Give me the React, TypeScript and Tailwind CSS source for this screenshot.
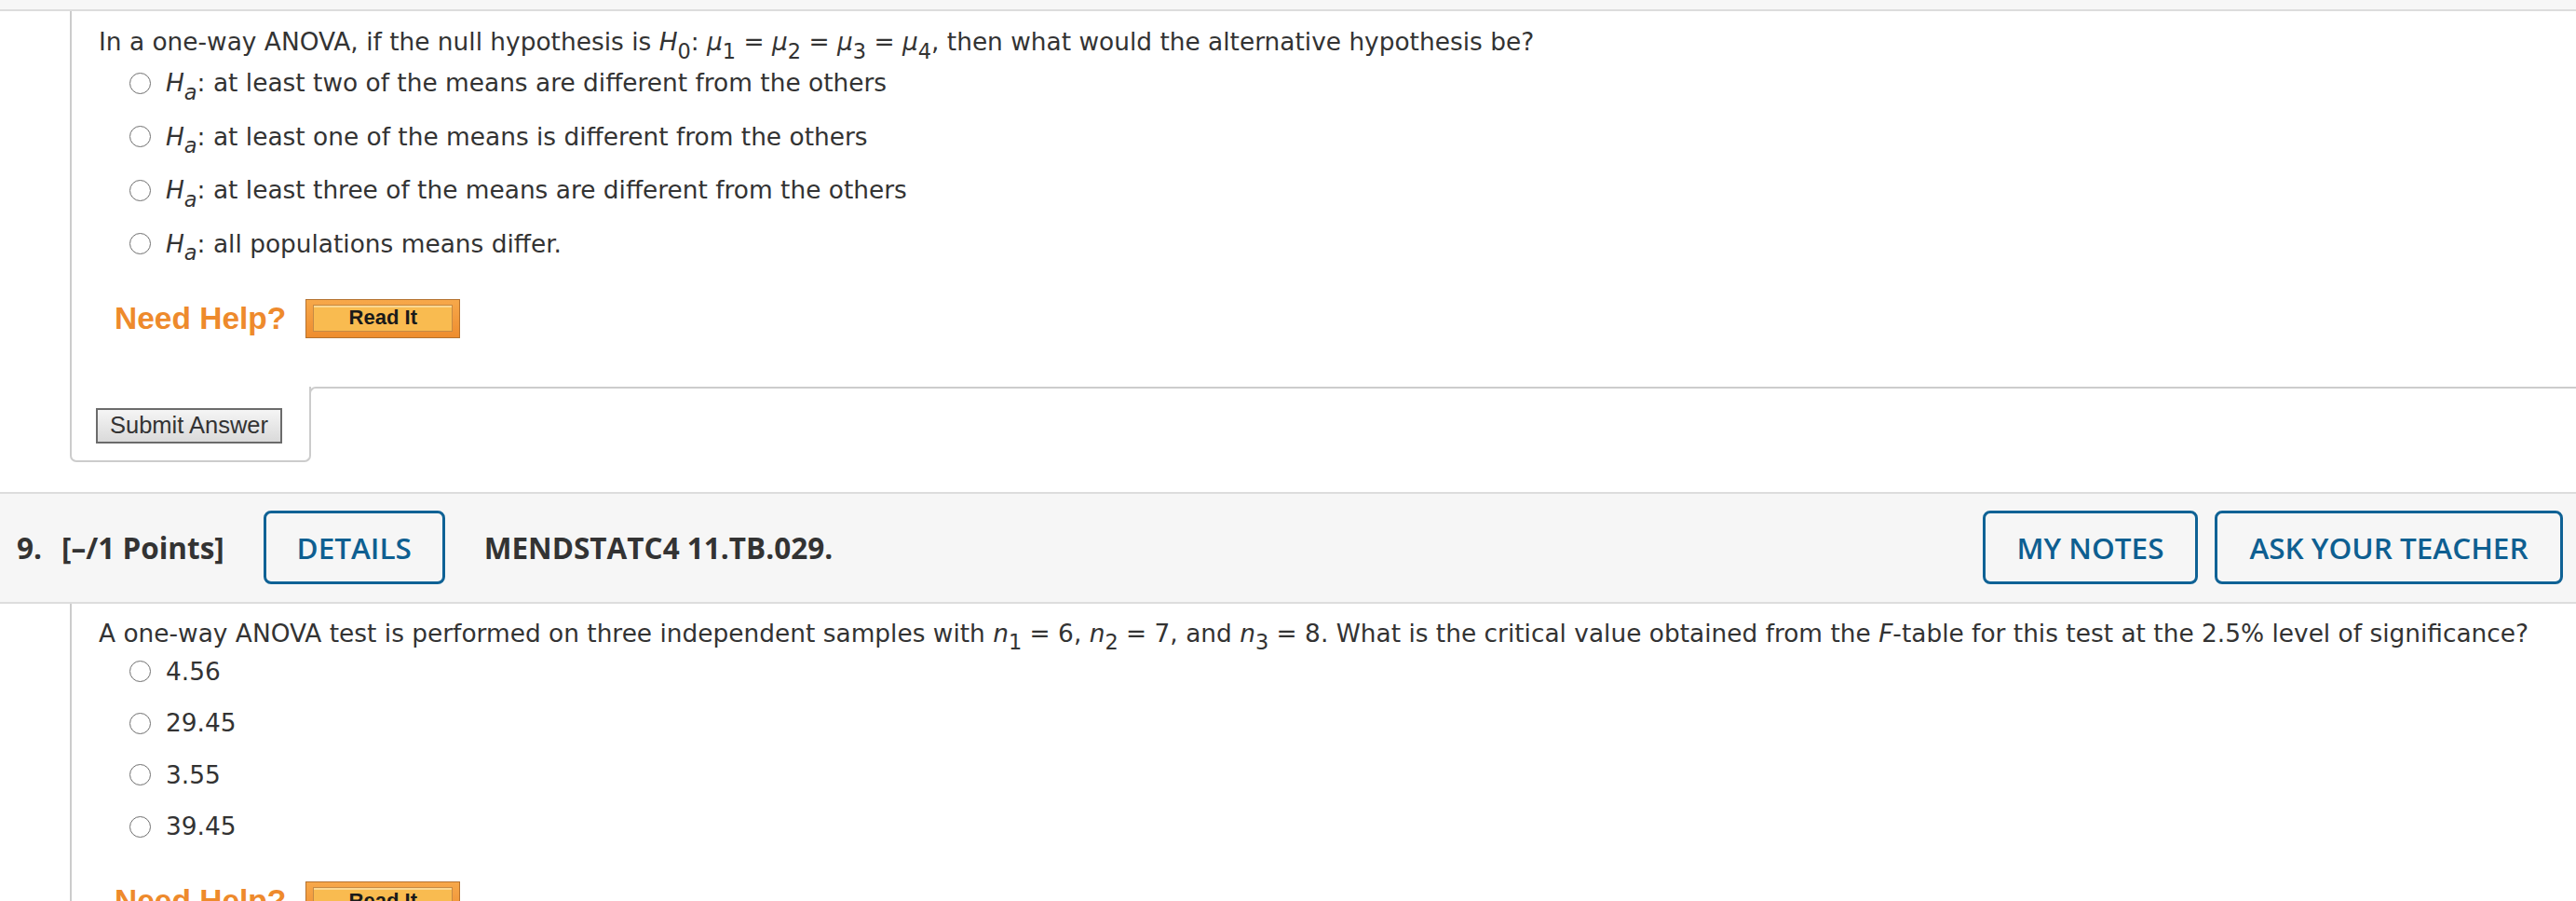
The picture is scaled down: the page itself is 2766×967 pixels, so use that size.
import React from "react";

const body = "font-['DejaVu_Sans','Verdana',sans-serif] text-[26.4px] leading-[30px] text-[#333333]";

function Sub({ children }: { children: React.ReactNode }) {
  return <span className="relative top-[0.4em] text-[0.85em] leading-none not-italic">{children}</span>;
}

function Radio() {
  return <span className="inline-block w-[23px] h-[23px] shrink-0 rounded-full border-[1.5px] border-[#707070] bg-white" />;
}

function Option({ children }: { children: React.ReactNode }) {
  return (
    <div className="flex items-center pl-[33px]">
      <Radio />
      <span className="ml-[16px] whitespace-nowrap">{children}</span>
    </div>
  );
}

function Ha() {
  return (
    <>
      <i>H</i>
      <Sub>
        <i>a</i>
      </Sub>
      :
    </>
  );
}

function NeedHelp() {
  return (
    <div className="flex items-center ml-[17px] h-[42px]">
      <span className="font-['Liberation_Sans',Arial,sans-serif] font-bold text-[33.5px] leading-none text-[#ee8a2c]">
        Need Help?
      </span>
      <div className="ml-[21px] w-[166px] h-[42px] border border-[#b5722f] bg-gradient-to-b from-[#f7a84a] to-[#ee8d2e] pt-[5px] pb-[6px] px-[7px]">
        <div className="h-full border border-[#c68a44] bg-[#f9bb50] shadow-[inset_0_2px_0_#fcd892] flex items-center justify-center font-['Liberation_Sans',Arial,sans-serif] font-bold text-[22px] leading-none text-[#1a1a1a]">
          Read It
        </div>
      </div>
    </div>
  );
}

function OutlineButton({ label, width }: { label: string; width: string }) {
  return (
    <div
      className={`${width} h-[79px] rounded-[8px] border-[3px] border-[#0f6295] flex items-center justify-center font-['Open_Sans',sans-serif] font-semibold text-[31.5px] text-[#0e5f91] whitespace-nowrap`}
    >
      {label}
    </div>
  );
}

export default function App() {
  return (
    <div className={`w-[2766px] h-[967px] overflow-hidden bg-white ${body}`}>
      {/* previous question tail */}
      <div className="h-[12px] bg-[#f7f7f7] border-b-2 border-[#dddddd]" />

      <div className="ml-[75px] border-l-2 border-[#cccccc] pl-[29px] pt-[18px] pb-[52px]">
        <div className="whitespace-nowrap">
          In a one-way ANOVA, if the null hypothesis is <i>H</i>
          <Sub>0</Sub>: <i>μ</i>
          <Sub>1</Sub> = <i>μ</i>
          <Sub>2</Sub> = <i>μ</i>
          <Sub>3</Sub> = <i>μ</i>
          <Sub>4</Sub>, then what would the alternative hypothesis be?
        </div>
        <div className="mt-[14px] flex flex-col gap-[27.5px]">
          <Option>
            <Ha /> at least two of the means are different from the others
          </Option>
          <Option>
            <Ha /> at least one of the means is different from the others
          </Option>
          <Option>
            <Ha /> at least three of the means are different from the others
          </Option>
          <Option>
            <Ha /> all populations means differ.
          </Option>
        </div>
        <div className="mt-[44px]">
          <NeedHelp />
        </div>
      </div>

      <div className="flex items-start">
        <div className="ml-[75px] w-[259px] border-l-2 border-r-2 border-b-2 border-[#cccccc] rounded-b-[7px] pl-[26px] pt-[23px] pb-[18px]">
          <div className="w-[200px] h-[38px] border-2 border-[#6b6b6b] bg-gradient-to-b from-[#f5f5f5] to-[#dadada] flex items-center justify-center font-['Liberation_Sans',Arial,sans-serif] text-[25.5px] leading-none text-[#333333]">
            Submit Answer
          </div>
        </div>
        <div className="-ml-[2px] flex-1 h-[10px] border-t-2 border-l-2 border-[#cccccc] rounded-tl-[7px]" />
      </div>

      {/* question 9 header */}
      <div className="mt-[32px] h-[120px] bg-[#f6f6f6] border-t-2 border-b-2 border-[#dddddd] flex items-center pl-[18px] pr-[14px] font-['Open_Sans',sans-serif] font-bold text-[31.5px] text-[#333333]">
        <span>9.</span>
        <span className="ml-[21px]">[–/1 Points]</span>
        <div className="ml-[42px]">
          <OutlineButton label="DETAILS" width="w-[195px]" />
        </div>
        <span className="ml-[42px]">MENDSTATC4 11.TB.029.</span>
        <div className="ml-auto flex gap-[18px]">
          <OutlineButton label="MY NOTES" width="w-[231px]" />
          <OutlineButton label="ASK YOUR TEACHER" width="w-[374px]" />
        </div>
      </div>

      <div className="ml-[75px] border-l-2 border-[#cccccc] pl-[29px] pt-[17px] pb-[40px]">
        <div className="whitespace-nowrap">
          A one-way ANOVA test is performed on three independent samples with <i>n</i>
          <Sub>1</Sub> = 6, <i>n</i>
          <Sub>2</Sub> = 7, and <i>n</i>
          <Sub>3</Sub> = 8. What is the critical value obtained from the <i>F</i>-table for this test at the 2.5% level of significance?
        </div>
        <div className="mt-[11px] flex flex-col gap-[25.5px]">
          <Option>4.56</Option>
          <Option>29.45</Option>
          <Option>3.55</Option>
          <Option>39.45</Option>
        </div>
        <div className="mt-[44px]">
          <NeedHelp />
        </div>
      </div>
    </div>
  );
}
